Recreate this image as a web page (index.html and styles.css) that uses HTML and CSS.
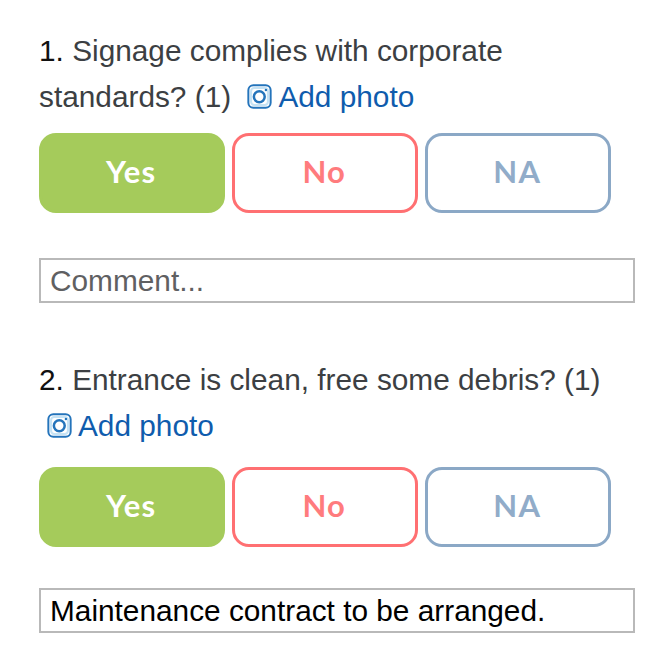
FILE: index.html
```html
<!DOCTYPE html>
<html lang="en">
<head>
    <meta charset="UTF-8">
    <meta name="viewport" content="width=device-width, initial-scale=1.0">
    <title>Audit Checklist</title>
    <link rel="stylesheet" href="styles.css">
</head>
<body>
    <div class="checklist">
        <!-- Question 1 -->
        <div class="question">
            <div class="question-text">
                <span class="number">1.</span> Signage complies with corporate standards? (1)
                <a class="add-photo"><svg class="photo-icon" viewBox="0 0 24 24"><rect class="frame" x="1.3" y="1.3" width="21.4" height="21.4" rx="4.8"/><rect class="body" x="3.9" y="3.9" width="16.2" height="16.2" rx="3"/><circle class="lens" cx="11.8" cy="12.2" r="5.2"/><circle class="dot" cx="18.2" cy="5.8" r="1.2"/></svg>Add photo</a>
            </div>
            <div class="answers">
                <button class="answer yes">Yes</button>
                <button class="answer no">No</button>
                <button class="answer na">NA</button>
            </div>
            <input class="comment" type="text" placeholder="Comment...">
        </div>

        <!-- Question 2 -->
        <div class="question second">
            <div class="question-text">
                <span class="number">2.</span> Entrance is clean, free some debris? (1)
                <a class="add-photo"><svg class="photo-icon" viewBox="0 0 24 24"><rect class="frame" x="1.3" y="1.3" width="21.4" height="21.4" rx="4.8"/><rect class="body" x="3.9" y="3.9" width="16.2" height="16.2" rx="3"/><circle class="lens" cx="11.8" cy="12.2" r="5.2"/><circle class="dot" cx="18.2" cy="5.8" r="1.2"/></svg>Add photo</a>
            </div>
            <div class="answers">
                <button class="answer yes">Yes</button>
                <button class="answer no">No</button>
                <button class="answer na">NA</button>
            </div>
            <input class="comment" type="text" value="Maintenance contract to be arranged.">
        </div>
    </div>
</body>
</html>
```
FILE: styles.css
```css
body {
    margin: 0;
    background-color: #fff;
    color: #3c3f43;
    font-family: "Liberation Sans", Arial, sans-serif;
    font-size: 29.8px;
    overflow: hidden;
}
.checklist {
    padding: 28px 28px 0 39px;
}
.question {
    margin-bottom: 54px;
}
.question-text {
    line-height: 46px;
    margin-bottom: 13px;
}
.second .question-text {
    margin-bottom: 18px;
}
.number {
    color: #111;
}
.add-photo {
    color: #0f5cad;
    margin-left: 8px;
    white-space: nowrap;
    cursor: pointer;
}
.photo-icon {
    width: 25px;
    height: 25px;
    margin-right: 6px;
    vertical-align: -2px;
    fill: none;
    stroke: #2474bb;
}
.frame {
    stroke-width: 1.9;
}
.body {
    stroke: #c5e3f5;
    stroke-width: 2;
}
.lens {
    stroke-width: 2.4;
}
.dot {
    fill: #2474bb;
    stroke: none;
}
.answers {
    display: flex;
    gap: 7.5px;
    margin-bottom: 45px;
}
.second .answers {
    margin-bottom: 41px;
}
.answer {
    width: 185.5px;
    height: 80px;
    padding: 0 1px 4px 0;
    box-sizing: border-box;
    border: 3px solid;
    border-radius: 17px;
    background-color: #fff;
    font-family: Lato, sans-serif;
    font-size: 31px;
    font-weight: 700;
    letter-spacing: 1.2px;
    cursor: pointer;
}
.yes {
    background-color: #a5cb5b;
    border-color: #a5cb5b;
    color: #fff;
}
.no {
    border-color: #ff7072;
    color: #ff7b7d;
}
.na {
    border-color: #8ba8c6;
    color: #91acc9;
}
.comment {
    display: block;
    width: 596px;
    height: 45px;
    padding: 0 9px;
    box-sizing: border-box;
    border: 2px solid #b9b9b9;
    background-color: #fff;
    color: #000;
    font-family: inherit;
    font-size: inherit;
    outline: none;
}
.comment::placeholder {
    color: #5f6062;
}
```
